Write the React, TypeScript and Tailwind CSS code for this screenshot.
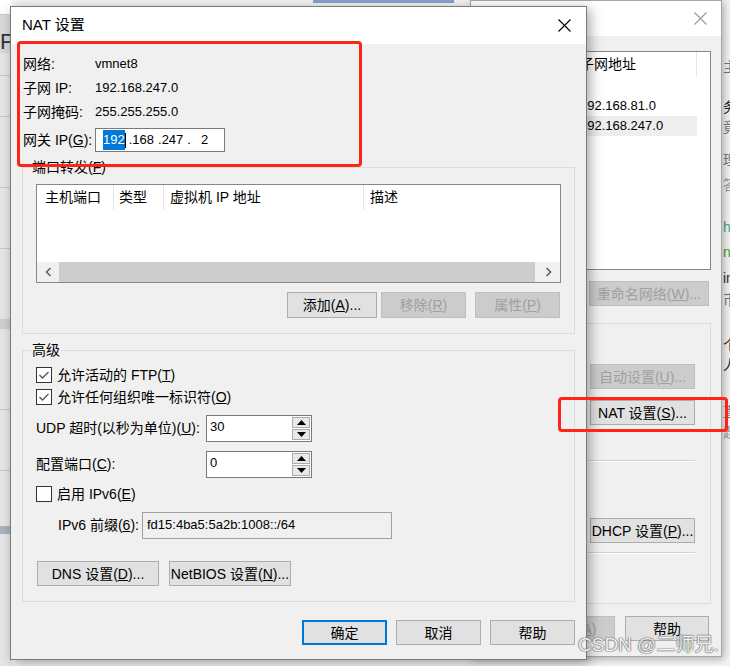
import React from 'react';

const Btn: React.FC<{ className?: string; disabled?: boolean; primary?: boolean; children: React.ReactNode }> = ({
  className = '',
  disabled,
  primary,
  children,
}) => {
  const tone = disabled
    ? 'bg-[#cccccc] border border-[#bfbfbf] text-[#a0a0a0]'
    : primary
    ? 'bg-[#e1e1e1] border-2 border-[#0078d7] text-black'
    : 'bg-[#e1e1e1] border border-[#adadad] text-black';
  return (
    <div className={`flex shrink-0 items-center justify-center text-[14px] leading-none ${tone} ${className}`}>
      {children}
    </div>
  );
};

const CloseX: React.FC<{ color?: string }> = ({ color = '#000' }) => (
  <svg width="13" height="13" viewBox="0 0 13 13">
    <path d="M0.5 0.5 L12.5 12.5 M12.5 0.5 L0.5 12.5" stroke={color} strokeWidth="1.1" />
  </svg>
);

const Check: React.FC<{ on?: boolean }> = ({ on }) => (
  <div className="flex h-[16px] w-[16px] shrink-0 items-center justify-center border border-[#333333] bg-white">
    {on && (
      <svg width="12" height="10" viewBox="0 0 12 10">
        <path d="M1.5 5 L4.5 8 L10.5 2" fill="none" stroke="#555" strokeWidth="1.3" />
      </svg>
    )}
  </div>
);

const Arrow: React.FC<{ up?: boolean }> = ({ up }) => (
  <svg width="9" height="5" viewBox="0 0 9 5">
    <path d={up ? 'M0 5 L4.5 0 L9 5Z' : 'M0 0 L4.5 5 L9 0Z'} fill="#000" />
  </svg>
);

const Spin: React.FC<{ value: string }> = ({ value }) => (
  <div className="flex h-[27px] w-[106px] border border-[#7a7a7a] bg-white">
    <div className="flex-1 pl-[3px] pt-[3px] text-[13px] leading-[15px]">{value}</div>
    <div className="flex w-[20px] flex-col gap-[1px] p-[1px]">
      <div className="flex flex-1 items-center justify-center border border-[#adadad] bg-[#e8e8e8]">
        <Arrow up />
      </div>
      <div className="flex flex-1 items-center justify-center border border-[#adadad] bg-[#e8e8e8]">
        <Arrow />
      </div>
    </div>
  </div>
);

const Chevron: React.FC<{ right?: boolean }> = ({ right }) => (
  <svg width="7" height="10" viewBox="0 0 7 10">
    <path d={right ? 'M1.5 1 L5.5 5 L1.5 9' : 'M5.5 1 L1.5 5 L5.5 9'} fill="none" stroke="#606060" strokeWidth="1.6" />
  </svg>
);

const InfoRow: React.FC<{ label: React.ReactNode; value: string }> = ({ label, value }) => (
  <div className="flex h-[24px] items-center">
    <span className="w-[72px] shrink-0 text-[14px]">{label}</span>
    <span className="text-[13px]">{value}</span>
  </div>
);

export default function App() {
  return (
    <div className="relative h-[666px] w-[730px] overflow-hidden bg-[#f4f4f4] font-['Liberation_Sans','Noto_Sans_CJK_SC',sans-serif] text-black">
      {/* window behind, left edge */}
      <div className="absolute left-0 top-0 flex h-full w-[12px] flex-col bg-[#e6e6e6]">
        <div className="h-[14px] bg-white" />
        <div className="h-[1px] bg-[#cfcfcf]" />
        <div className="flex h-[38px] items-end bg-[#d9d9d9] text-[22px] leading-none text-[#333]">P</div>
        <div className="mt-[22px] h-[1px] bg-[#c8c8c8]" />
        <div className="mt-[40px] h-[1px] bg-[#c8c8c8]" />
        <div className="mt-[70px] h-[1px] bg-[#c8c8c8]" />
        <div className="mt-[60px] h-[1px] bg-[#c8c8c8]" />
        <div className="mt-[70px] h-[10px] bg-[#cfcfcf]" />
        <div className="mt-[80px] h-[1px] bg-[#c8c8c8]" />
        <div className="mt-[60px] h-[1px] bg-[#c8c8c8]" />
        <div className="mt-[55px] h-[8px] bg-[#a9b3bd]" />
      </div>

      {/* top strip of the window behind */}
      <div className="absolute left-[313px] top-0 h-[3px] w-[141px] bg-[#8aa0c8]" />

      {/* far right page fragments */}
      <div className="absolute left-[723px] top-0 flex w-[10px] flex-col text-[14px] leading-[20px]">
        <div className="h-[57px]" />
        <span className="text-[#777]">主</span>
        <div className="h-[20px]" />
        <span className="text-[#222]">务</span>
        <span className="text-[#777]">竟</span>
        <div className="h-[13px]" />
        <span className="text-[#777]">理</span>
        <span className="mt-[5px] text-[#999]">答</span>
        <span className="mt-[22px] text-[#3aa88a]">h</span>
        <span className="mt-[5px] text-[#4aa02c]">ne</span>
        <span className="mt-[6px] text-[#333]">in</span>
        <span className="mt-[2px] text-[#777]">币</span>
        <span className="mt-[25px] text-[#222]">个人</span>
        <div className="h-[27px]" />
        <span className="text-[#777]">直</span>
        <span className="text-[#999]">题</span>
      </div>

      {/* background dialog */}
      <div className="absolute left-[470px] top-0 flex h-[657px] w-[252px] flex-col border border-[#a5a5a5] bg-[#f0f0f0] shadow-[2px_2px_8px_rgba(0,0,0,0.3)]">
        <div className="flex h-[35px] shrink-0 items-center justify-end bg-white pr-[14px]">
          <CloseX color="#999" />
        </div>
        <div className="flex flex-1 flex-col px-[10px]">
          <div className="mt-[15px] flex h-[219px] flex-col border border-[#828790] bg-white text-[13px]">
            <div className="flex h-[24px] shrink-0 text-[14px]">
              <div className="w-[91px] border-r border-[#e5e5e5]" />
              <div className="flex w-[124px] items-center border-r border-[#e5e5e5] pl-[7px]">子网地址</div>
            </div>
            <div className="h-[20px]" />
            <div className="flex h-[20px] items-center">
              <div className="w-[91px]" />
              <span className="pl-[7px]">192.168.81.0</span>
            </div>
            <div className="flex h-[20px] w-[215px] items-center bg-[#eeeeee]">
              <div className="w-[91px]" />
              <span className="pl-[7px]">192.168.247.0</span>
            </div>
          </div>
          <Btn disabled className="mr-[2px] mt-[11px] h-[25px] w-[120px] self-end">
            重命名网络(<u>W</u>)...
          </Btn>
          <div className="mt-[17px] flex h-[281px] flex-col items-end border border-[#dcdcdc] pr-[15px]">
            <Btn disabled className="mt-[40px] h-[25px] w-[105px]">
              自动设置(<u>U</u>)...
            </Btn>
            <Btn className="mt-[11px] h-[25px] w-[105px]">
              NAT 设置(<u>S</u>)...
            </Btn>
            <div className="mt-[35px] h-[2px] w-[140px] border-t border-b border-t-[#d0d0d0] border-b-white" />
            <Btn className="mt-[56px] h-[25px] w-[105px]">
              DHCP 设置(<u>P</u>)...
            </Btn>
            <div className="mt-[9px] h-[2px] w-[140px] border-t border-b border-t-[#d0d0d0] border-b-white" />
          </div>
          <div className="mr-[2px] mt-[12px] flex justify-end gap-[10px]">
            <Btn disabled className="h-[25px] w-[84px]">
              应用(<u>A</u>)
            </Btn>
            <Btn className="h-[25px] w-[84px]">帮助</Btn>
          </div>
        </div>
      </div>

      {/* main dialog */}
      <div className="absolute left-[10px] top-[6px] z-10 flex h-[654px] w-[577px] flex-col border border-[#7a7a7a] bg-[#f0f0f0] shadow-[3px_3px_12px_rgba(0,0,0,0.35)]">
        <div className="flex h-[37px] shrink-0 items-center justify-between bg-white pl-[11px] pr-[15px]">
          <span className="text-[15px]">NAT 设置</span>
          <CloseX />
        </div>
        <div className="flex flex-1 flex-col px-[11px] pt-[8px] text-[14px]">
          <div className="pl-[1px]">
            <InfoRow label="网络:" value="vmnet8" />
            <InfoRow label="子网 IP:" value="192.168.247.0" />
            <InfoRow label="子网掩码:" value="255.255.255.0" />
            <div className="mt-[4px] flex h-[24px] items-center">
              <span className="w-[72px] shrink-0">
                网关 IP(<u>G</u>):
              </span>
              <div className="flex h-[24px] w-[130px] items-center border border-[#7a7a7a] bg-white pl-[7px] text-[13px] whitespace-pre">
                <span className="bg-[#0078d7] text-white">192</span>
                <span className="h-[15px] w-[1px] bg-black" />
                <span className="ml-[3px]">.168</span>
                <span className="ml-[4px]">.247</span>
                <span className="ml-[4px]">.</span>
                <span className="ml-[10px]">2</span>
              </div>
            </div>
          </div>

          <fieldset className="mt-[6px] border border-[#dcdcdc]">
            <legend className="ml-[8px] px-[1px] leading-[18px]">
              端口转发(<u>F</u>)
            </legend>
            <div className="px-[13px] pb-[15px] pt-[8px]">
              <div className="flex h-[99px] flex-col border border-[#828790] bg-white">
                <div className="flex h-[25px] shrink-0">
                  <div className="flex w-[77px] items-center border-r border-[#e5e5e5] pl-[8px]">主机端口</div>
                  <div className="flex w-[50px] items-center border-r border-[#e5e5e5] pl-[5px]">类型</div>
                  <div className="flex w-[200px] items-center border-r border-[#e5e5e5] pl-[6px]">虚拟机 IP 地址</div>
                  <div className="flex items-center pl-[6px]">描述</div>
                </div>
                <div className="flex-1" />
                <div className="flex h-[20px] shrink-0 bg-[#f0f0f0]">
                  <div className="flex w-[22px] items-center justify-center">
                    <Chevron />
                  </div>
                  <div className="flex-1 bg-[#cdcdcd]" />
                  <div className="flex w-[25px] items-center justify-center pl-[2px]">
                    <Chevron right />
                  </div>
                </div>
              </div>
              <div className="mr-[1px] mt-[9px] flex justify-end">
                <Btn className="h-[26px] w-[90px]">
                  添加(<u>A</u>)...
                </Btn>
                <Btn disabled className="ml-[4px] h-[26px] w-[85px]">
                  移除(<u>R</u>)
                </Btn>
                <Btn disabled className="ml-[9px] h-[26px] w-[85px]">
                  属性(<u>P</u>)
                </Btn>
              </div>
            </div>
          </fieldset>

          <fieldset className="mt-[7px] border border-[#dcdcdc]">
            <legend className="ml-[8px] px-[1px] leading-[18px]">高级</legend>
            <div className="flex flex-col px-[13px] pb-[15px] pt-[5px]">
              <div className="flex h-[22px] items-center gap-[5px]">
                <Check on />
                <span>
                  允许活动的 FTP(<u>T</u>)
                </span>
              </div>
              <div className="flex h-[22px] items-center gap-[5px]">
                <Check on />
                <span>
                  允许任何组织唯一标识符(<u>O</u>)
                </span>
              </div>
              <div className="mt-[7px] flex h-[27px] items-center">
                <span className="w-[170px] shrink-0">
                  UDP 超时(以秒为单位)(<u>U</u>):
                </span>
                <Spin value="30" />
              </div>
              <div className="mt-[9px] flex h-[27px] items-center">
                <span className="w-[170px] shrink-0">
                  配置端口(<u>C</u>):
                </span>
                <Spin value="0" />
              </div>
              <div className="mt-[5px] flex h-[22px] items-center gap-[5px]">
                <Check />
                <span>
                  启用 IPv6(<u>E</u>)
                </span>
              </div>
              <div className="mt-[7px] flex h-[27px] items-center pl-[22px]">
                <span className="w-[84px] shrink-0">
                  IPv6 前缀(<u>6</u>):
                </span>
                <div className="h-[27px] w-[250px] border border-[#a0a0a0] pl-[4px] pt-[4px] text-[13px] leading-[15px]">
                  fd15:4ba5:5a2b:1008::/64
                </div>
              </div>
              <div className="mt-[22px] flex gap-[10px] pl-[1px]">
                <Btn className="h-[25px] w-[122px]">
                  DNS 设置(<u>D</u>)...
                </Btn>
                <Btn className="h-[25px] w-[122px]">
                  NetBIOS 设置(<u>N</u>)...
                </Btn>
              </div>
            </div>
          </fieldset>

          <div className="mt-[18px] flex justify-end gap-[9px]">
            <Btn primary className="h-[25px] w-[85px]">
              确定
            </Btn>
            <Btn className="h-[25px] w-[85px]">取消</Btn>
            <Btn className="h-[25px] w-[85px]">帮助</Btn>
          </div>
        </div>
      </div>

      {/* red annotations */}
      <div className="absolute left-[17px] top-[41px] z-20 h-[126px] w-[345px] rounded-[4px] border-[3px] border-[#ff2418]" />
      <div className="absolute left-[558px] top-[397px] z-20 h-[35px] w-[170px] rounded-[4px] border-[3px] border-[#ff2418]" />

      {/* watermark */}
      <div className="absolute left-[578px] top-[634px] z-30 text-[19px] leading-[22px] text-[#f2f2f2] [text-shadow:0_0_1px_#555,0_0_1px_#555,0_0_2px_#999]">
        CSDN @二师兄.
      </div>
    </div>
  );
}
